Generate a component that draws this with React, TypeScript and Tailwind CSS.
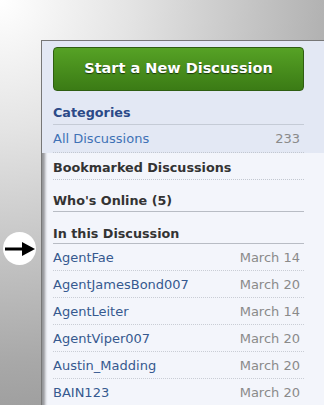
import React from 'react';

const participants = [
  { name: 'AgentFae', date: 'March 14' },
  { name: 'AgentJamesBond007', date: 'March 20' },
  { name: 'AgentLeiter', date: 'March 14' },
  { name: 'AgentViper007', date: 'March 20' },
  { name: 'Austin_Madding', date: 'March 20' },
  { name: 'BAIN123', date: 'March 20' },
];

export default function App() {
  return (
    <div className="w-[324px] h-[405px] overflow-hidden flex flex-col bg-[radial-gradient(circle_at_0%_0%,#ffffff_0%,#e4e4e4_25%,#a8a8a8_70%,#8a8a8a_100%)] font-['DejaVu_Sans',sans-serif]">
      <div className="h-[40px] shrink-0" />
      <div className="flex flex-1">
        {/* left rail with the arrow marker */}
        <div className="w-[41px] shrink-0 pt-[192px] pl-[3px]">
          <div className="w-[33px] h-[33px] rounded-full bg-white flex items-center justify-center">
            <svg width="32" height="14" viewBox="0 0 32 14">
              <line x1="1" y1="7" x2="20" y2="7" stroke="#000" strokeWidth="3" />
              <polygon points="18,0 31,7 18,14" fill="#000" />
            </svg>
          </div>
        </div>

        {/* sidebar panel */}
        <div className="flex-1 bg-[#f3f5fb] border-l border-t border-[#777] shadow-[inset_3px_2px_3px_rgba(0,0,0,0.4)]">
          <div className="bg-[#e3e8f4] pl-[11px] pr-[20px] pt-[6px]">
            <button className="w-full h-[44px] rounded-[4px] border border-[#2f5e12] bg-gradient-to-b from-[#56a225] to-[#3b7b15] text-white font-bold text-[14.5px] [text-shadow:0_1px_1px_rgba(0,0,0,0.6)]">
              Start a New Discussion
            </button>
            <div className="mt-[14px] text-[12.75px] leading-[16px] font-bold text-[#2c4a88] pb-[3px] border-b border-[#c5cbd6]">
              Categories
            </div>
            <div className="flex justify-between items-center h-[28px] pt-[1px] text-[13px] border-b border-dotted border-[#c2c7d0]">
              <span className="text-[#3f72b6]">All Discussions</span>
              <span className="text-[#8a8a8a] pr-[4px]">233</span>
            </div>
          </div>

          <div className="pl-[11px] pr-[20px]">
            <div className="h-[27px] flex items-end pb-[3px] text-[12.75px] leading-[16px] font-bold text-[#333] border-b border-dotted border-[#c2c7d0]">
              Bookmarked Discussions
            </div>
            <div className="h-[32px] flex items-end pb-[2px] text-[12.75px] leading-[16px] font-bold text-[#333] border-b border-[#b8bcc4]">
              Who's Online (5)
            </div>
            <div className="h-[32px] flex items-end pb-[1px] text-[12.75px] leading-[16px] font-bold text-[#333] border-b border-[#b8bcc4]">
              In this Discussion
            </div>
            {participants.map((p) => (
              <div
                key={p.name}
                className="flex justify-between items-center h-[27px] pt-[2px] text-[13px] border-b border-dotted border-[#c9cdd5]"
              >
                <span className="text-[#36598f]">{p.name}</span>
                <span className="text-[#8a8a8a] pr-[4px]">{p.date}</span>
              </div>
            ))}
          </div>
        </div>
      </div>
    </div>
  );
}
